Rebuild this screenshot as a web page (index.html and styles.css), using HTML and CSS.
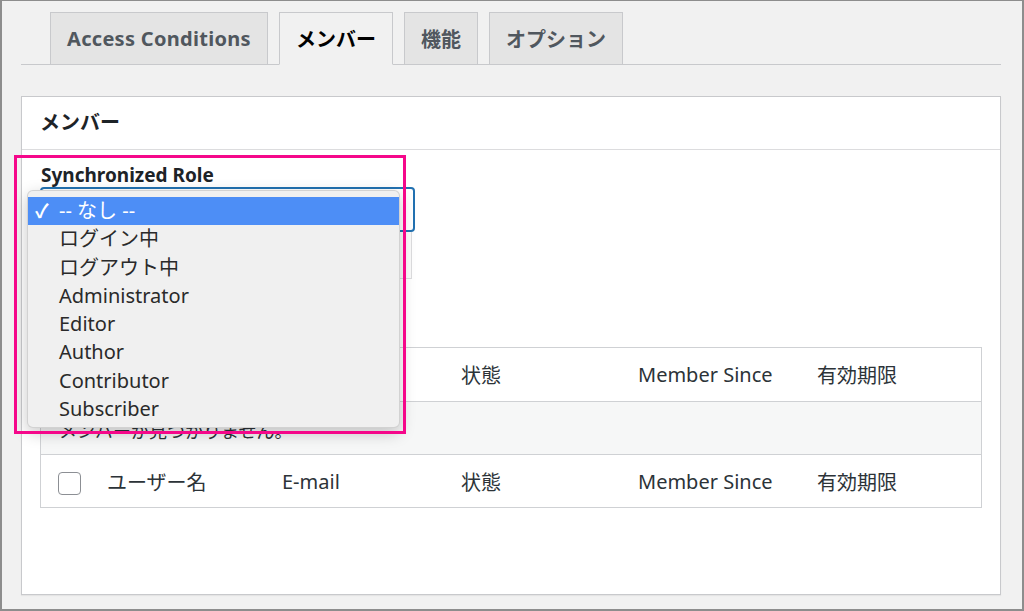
FILE: index.html
```html
<!DOCTYPE html>
<html lang="ja">
<head>
    <meta charset="UTF-8">
    <meta name="viewport" content="width=device-width, initial-scale=1.0">
    <title>メンバー</title>
    <link rel="stylesheet" href="styles.css">
</head>
<body>
    <div class="frame">
        <nav class="tabs">
            <a class="tab latin">Access Conditions</a>
            <a class="tab active">メンバー</a>
            <a class="tab">機能</a>
            <a class="tab">オプション</a>
        </nav>

        <div class="panel">
            <h2 class="panel-title">メンバー</h2>
            <div class="panel-body">
                <div class="role-field">
                    <label class="role-label">Synchronized Role</label>
                    <div class="role-select">
                        <span class="select-value">-- なし --</span>
                        <svg class="select-arrow" width="12" height="8" viewBox="0 0 12 8"><path d="M1 1.5l5 5 5-5" fill="none" stroke="#50575e" stroke-width="2"/></svg>
                    </div>
                    <div class="role-extra"></div>

                    <!-- open dropdown of the select -->
                    <ul class="role-menu">
                        <li class="selected"><span class="check">✓</span>-- なし --</li>
                        <li>ログイン中</li>
                        <li>ログアウト中</li>
                        <li>Administrator</li>
                        <li>Editor</li>
                        <li>Author</li>
                        <li>Contributor</li>
                        <li>Subscriber</li>
                    </ul>
                    <div class="mark"></div>
                </div>

                <div class="members">
                    <div class="row head">
                        <div class="cell cb"><span class="checkbox"></span></div>
                        <div class="cell">ユーザー名</div>
                        <div class="cell">E-mail</div>
                        <div class="cell">状態</div>
                        <div class="cell">Member Since</div>
                        <div class="cell">有効期限</div>
                    </div>
                    <div class="row empty">
                        <div class="empty-text">メンバーが見つかりません。</div>
                    </div>
                    <div class="row foot">
                        <div class="cell cb"><span class="checkbox"></span></div>
                        <div class="cell">ユーザー名</div>
                        <div class="cell">E-mail</div>
                        <div class="cell">状態</div>
                        <div class="cell">Member Since</div>
                        <div class="cell">有効期限</div>
                    </div>
                </div>
            </div>
        </div>
    </div>
</body>
</html>
```

FILE: styles.css
```css
*{
    padding: 0;
    margin: 0;
    box-sizing: border-box;
}
body{
    background-color: #f1f1f1;
    font-family: "Noto Sans", "Noto Sans CJK JP", sans-serif;
    color: #2c3338;
}
.frame{
    width: 1024px;
    height: 611px;
    border: 2px solid #8d8d8d;
    border-top-width: 1px;
    background-color: #f1f1f1;
    overflow: hidden;
}

/* tabs */
.tabs{
    display: flex;
    gap: 11px;
    margin: 11px 21px 0 19px;
    padding-left: 29px;
    border-bottom: 1px solid #c8c9cc;
}
.tab{
    display: flex;
    align-items: center;
    height: 53px;
    margin-bottom: -1px;
    padding: 0 16px;
    border: 1px solid #c8c9cc;
    background-color: #e4e4e4;
    color: #50575e;
    font-size: 20px;
    font-weight: 700;
}
.tab.latin{
    letter-spacing: 0.3px;
}
.tab.active{
    background-color: #f1f1f1;
    border-bottom-color: #f1f1f1;
    color: #000;
}

/* panel */
.panel{
    margin: 31px 21px 0 19px;
    border: 1px solid #c8c9cc;
    background-color: #fff;
    box-shadow: 0 1px 1px rgba(0,0,0,.05);
}
.panel-title{
    height: 53px;
    line-height: 52px;
    padding: 0 18px;
    border-bottom: 1px solid #dcdcde;
    font-size: 20px;
    font-weight: 700;
    color: #1d2327;
}
.panel-body{
    padding: 13px 18px 86px;
}

/* role select */
.role-field{
    position: relative;
}
.role-label{
    display: block;
    padding-left: 1px;
    font-size: 19px;
    font-weight: 700;
    line-height: 24px;
    color: #1d2327;
}
.role-select{
    position: relative;
    display: flex;
    align-items: center;
    width: 375px;
    height: 45px;
    padding: 0 14px;
    border: 2px solid #2271b1;
    border-radius: 4px;
    font-size: 18px;
}
.select-arrow{
    position: absolute;
    right: 13px;
    top: 17px;
}
.role-extra{
    width: 372px;
    height: 47px;
    border: 1px solid #dcdcde;
    border-top: 0;
    background-color: #fbfbfb;
}
.role-menu{
    position: absolute;
    left: -13px;
    top: 27px;
    width: 373px;
    padding: 6px 0 4px;
    list-style: none;
    background-color: #f0f0f0;
    border: 1px solid rgba(0,0,0,.12);
    border-radius: 6px;
    box-shadow: 0 5px 16px rgba(0,0,0,.22);
    z-index: 2;
}
.role-menu li{
    position: relative;
    height: 28.3px;
    line-height: 28px;
    padding-left: 31px;
    font-size: 20px;
    color: #2a2a2a;
}
.role-menu li.selected{
    background-color: #4d8ef6;
    color: #fff;
}
.check{
    position: absolute;
    left: 7px;
    top: 0;
    font-size: 19px;
    font-weight: 700;
}
.mark{
    position: absolute;
    left: -26px;
    top: -8px;
    width: 392px;
    height: 279px;
    border: 3px solid #f5078a;
    z-index: 3;
}

/* members table */
.members{
    margin-top: 68px;
    border: 1px solid #cfd1d4;
}
.row{
    display: grid;
    grid-template-columns: 66px 175px 179px 177px 179px 1fr;
    align-items: center;
    height: 53px;
    font-size: 20px;
}
.row + .row{
    border-top: 1px solid #cfd1d4;
}
.row.empty{
    display: flex;
    background-color: #f6f7f7;
    padding-left: 18px;
    padding-top: 3px;
    font-size: 18px;
}
.cell.cb{
    padding-left: 17px;
    display: flex;
}
.checkbox{
    display: block;
    width: 23px;
    height: 23px;
    margin-top: 4px;
    border: 1px solid #8c8f94;
    border-radius: 4px;
    background-color: #fff;
}
```
